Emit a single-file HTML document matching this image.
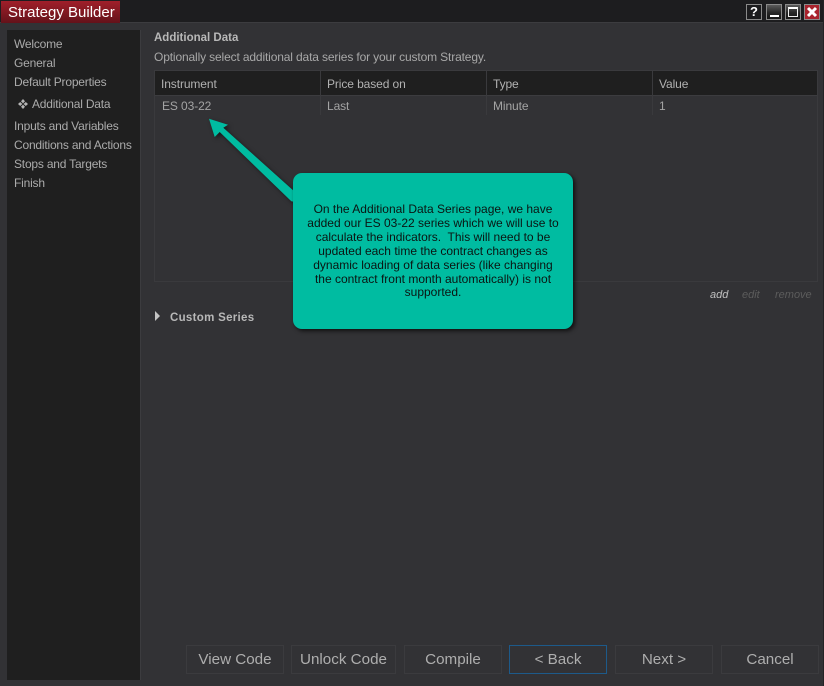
<!DOCTYPE html>
<html><head><meta charset="utf-8"><style>
html,body{margin:0;padding:0;width:824px;height:686px;overflow:hidden;background:#323235}
body{position:relative;font-family:"Liberation Sans",sans-serif;font-size:12px;color:#b4b4b4}
.a{position:absolute;white-space:nowrap}
.nav{left:14px;color:#ababab;font-size:12px;line-height:14px;letter-spacing:-.2px}
.hd{top:77px;color:#b2b2b2;line-height:14px;letter-spacing:-.1px}
.cell{top:99px;color:#a4a4a4;line-height:14px;letter-spacing:-.1px}
.sep{position:absolute;width:1px;background:#3a3a3d}
.btn{position:absolute;top:645px;height:29px;box-sizing:border-box;border:1px solid #3b3b3e;text-align:center;line-height:28px;font-size:15.2px;color:#aeaeae}
.wb{position:absolute;top:4px;width:16px;height:16px;box-sizing:border-box;border:1px solid #8a8a8a;background:linear-gradient(#5a5a5a,#262626 55%,#161616)}
</style></head><body>
<div class="a" style="left:0;top:0;width:824px;height:23px;background:#1d1d1f;border-bottom:1px solid #3c3c3f;box-sizing:border-box"></div>
<div class="a" style="left:1px;top:1px;width:119px;height:22px;background:linear-gradient(#a01f2a,#64121a)"></div>
<div class="a" style="left:8px;top:4px;color:#fff;font-size:15px;line-height:18px">Strategy Builder</div>
<div class="wb" style="left:746px;background:#1c1c1e;color:#fff;font-weight:bold;font-size:13px;line-height:14px;text-align:center">?</div>
<div class="wb" style="left:766px"><div class="a" style="left:3px;top:10px;width:9px;height:2px;background:#fff"></div></div>
<div class="wb" style="left:785px"><div class="a" style="left:2px;top:2px;width:10px;height:10px;box-sizing:border-box;border:1px solid #eee;border-top:2px solid #fff"></div></div>
<div class="wb" style="left:804px;background:#a9232d"><svg class="a" style="left:1px;top:1px" width="12" height="12"><path d="M2 2L10 10M10 2L2 10" stroke="#fff" stroke-width="3"/></svg></div>
<div class="a" style="right:0;top:0;width:1px;height:686px;background:#232325"></div>

<div class="a" style="left:7px;top:30px;width:133px;height:650px;background:#1f1f1f;border-right:1px solid #3c3c3f"></div>
<div class="a nav" style="top:37px">Welcome</div>
<div class="a nav" style="top:56px">General</div>
<div class="a nav" style="top:75px">Default Properties</div>
<div class="a nav" style="top:97px;left:32px">Additional Data</div>
<svg class="a" style="left:18px;top:99px" width="10" height="10"><path d="M5 0L7 2.200L5 4.400L3 2.200ZM5 5.600L7 7.800L5 10L3 7.800ZM0 5L2.200 3L4.400 5L2.200 7ZM5.600 5L7.800 3L10 5L7.800 7Z" fill="#b5b5b5"/></svg>
<div class="a nav" style="top:119px">Inputs and Variables</div>
<div class="a nav" style="top:138px">Conditions and Actions</div>
<div class="a nav" style="top:157px">Stops and Targets</div>
<div class="a nav" style="top:176px">Finish</div>

<div class="a" style="left:154px;top:31px;font-weight:bold;font-size:11.5px;line-height:14px;color:#b8b8b8">Additional Data</div>
<div class="a" style="left:154px;top:50px;line-height:14px;color:#a8a8a8;letter-spacing:-.14px">Optionally select additional data series for your custom Strategy.</div>

<div class="a" style="left:154px;top:70px;width:664px;height:212px;box-sizing:border-box;border:1px solid #3a3a3d"></div>
<div class="a" style="left:155px;top:71px;width:662px;height:25px;background:#1f1f1f;border-bottom:1px solid #3c3c3f;box-sizing:border-box"></div>
<div class="sep" style="left:320px;top:71px;height:44px"></div>
<div class="sep" style="left:486px;top:71px;height:44px"></div>
<div class="sep" style="left:652px;top:71px;height:44px"></div>
<div class="a hd" style="left:161px">Instrument</div>
<div class="a hd" style="left:327px">Price based on</div>
<div class="a hd" style="left:493px">Type</div>
<div class="a hd" style="left:659px">Value</div>
<div class="a cell" style="left:162px">ES 03-22</div>
<div class="a cell" style="left:327px">Last</div>
<div class="a cell" style="left:493px">Minute</div>
<div class="a cell" style="left:659px">1</div>

<div class="a" style="left:710px;top:289px;font-style:italic;font-size:11px;line-height:13px;color:#c0c0c0">add</div>
<div class="a" style="left:742px;top:289px;font-style:italic;font-size:11px;line-height:13px;color:#5c5c5c">edit</div>
<div class="a" style="left:775px;top:289px;font-style:italic;font-size:11px;line-height:13px;color:#5c5c5c">remove</div>

<svg class="a" style="left:154px;top:311px" width="7" height="11"><path d="M1 0L6 5L1 10Z" fill="#c4c4c4"/></svg>
<div class="a" style="left:170px;top:311px;font-weight:bold;font-size:11.500px;letter-spacing:.3px;line-height:14px;color:#b8b8b8">Custom Series</div>

<svg class="a" style="left:200px;top:110px;filter:drop-shadow(2px 2px 2px rgba(0,0,0,.5))" width="110" height="110"><path d="M9 8.700L28 14.700L23.300 17.700L95 82L95 92L91.300 91.300L19.700 22L14.700 27Z" fill="#00bca1"/></svg>
<div class="a" style="left:293px;top:173px;width:280px;height:156px;background:#00bca1;border-radius:9px;box-shadow:2px 2px 4px rgba(0,0,0,.7);color:#0a1512;text-align:center;white-space:normal;font-size:12px;line-height:13.900px;box-sizing:border-box;padding-top:30px">On the Additional Data Series page, we have<br>added our ES 03-22 series which we will use to<br>calculate the indicators.&nbsp; This will need to be<br>updated each time the contract changes as<br>dynamic loading of data series (like changing<br>the contract front month automatically) is not<br>supported.</div>

<div class="btn" style="left:186px;width:98px">View Code</div>
<div class="btn" style="left:291px;width:105px">Unlock Code</div>
<div class="btn" style="left:404px;width:98px">Compile</div>
<div class="btn" style="left:509px;width:98px;border-color:#1d5a8a">&lt; Back</div>
<div class="btn" style="left:615px;width:98px">Next &gt;</div>
<div class="btn" style="left:721px;width:98px">Cancel</div>
</body></html>
